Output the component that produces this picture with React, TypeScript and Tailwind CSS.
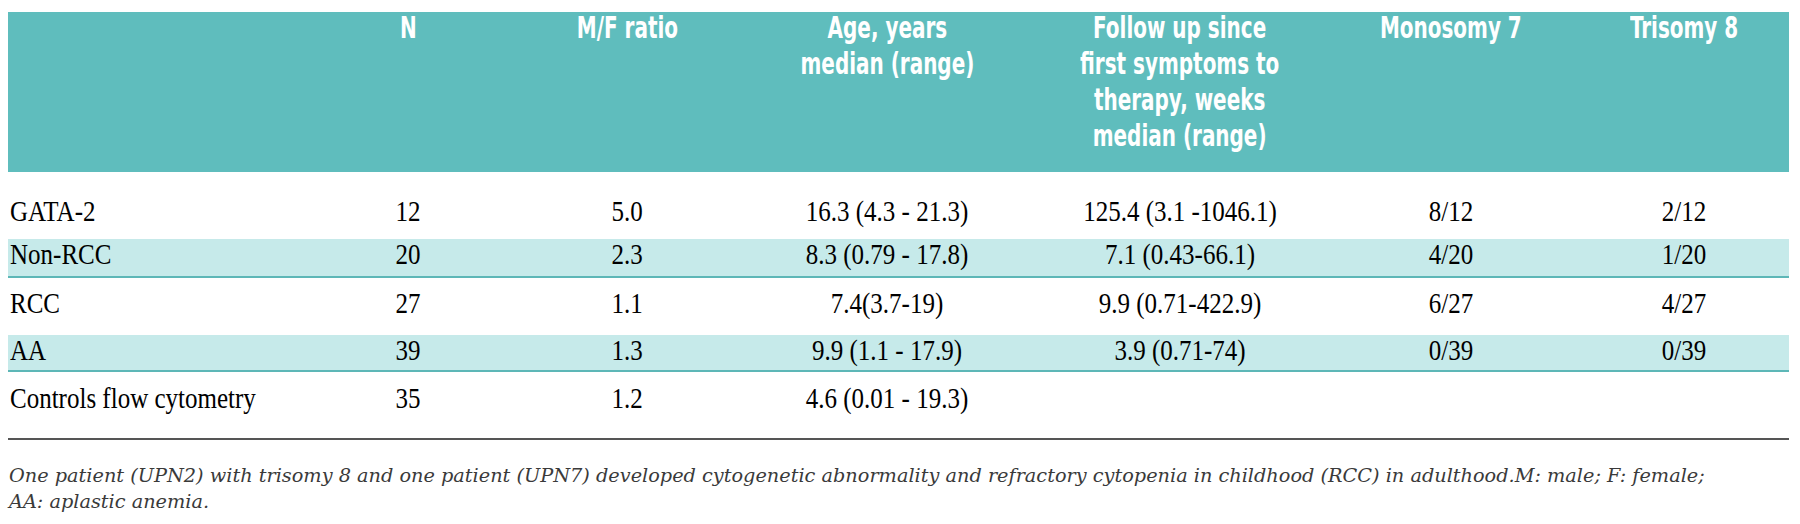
import React from "react";

const COLS = "grid grid-cols-[291px_218px_220px_300px_286px_256px_210px]";

type Row = { label: string; cells: string[] };

const rows: Row[] = [
  { label: "GATA-2", cells: ["12", "5.0", "16.3 (4.3 - 21.3)", "125.4 (3.1 -1046.1)", "8/12", "2/12"] },
  { label: "Non-RCC", cells: ["20", "2.3", "8.3 (0.79 - 17.8)", "7.1 (0.43-66.1)", "4/20", "1/20"] },
  { label: "RCC", cells: ["27", "1.1", "7.4(3.7-19)", "9.9 (0.71-422.9)", "6/27", "4/27"] },
  { label: "AA", cells: ["39", "1.3", "9.9 (1.1 - 17.9)", "3.9 (0.71-74)", "0/39", "0/39"] },
  { label: "Controls flow cytometry", cells: ["35", "1.2", "4.6 (0.01 - 19.3)", "", "", ""] },
];

function Cells({ row }: { row: Row }) {
  return (
    <>
      <div className="pl-[2px] whitespace-nowrap">
        <span className="inline-block origin-left scale-y-[1.2]">{row.label}</span>
      </div>
      {row.cells.map((c, i) => (
        <div key={i} className="text-center whitespace-nowrap">
          <span className="inline-block origin-center scale-y-[1.2]">{c}</span>
        </div>
      ))}
    </>
  );
}

function H({ children }: { children: React.ReactNode }) {
  return (
    <div className="flex justify-center -mt-[2px]">
      <div className="text-center whitespace-nowrap scale-x-[0.74] origin-center">{children}</div>
    </div>
  );
}

export default function App() {
  return (
    <div className="w-[1800px] h-[524px] bg-white overflow-hidden pt-[12px] pl-[8px] pr-[11px]">
      {/* Header */}
      <div
        className={`${COLS} h-[160px] bg-[#5fbdbd] text-white font-bold text-[30px] leading-[36px] font-['Liberation_Sans_Narrow','DejaVu_Sans_Condensed',sans-serif]`}
      >
        <div />
        <H>N</H>
        <H>M/F ratio</H>
        <H>
          Age, years
          <br />
          median (range)
        </H>
        <H>
          Follow up since
          <br />
          first symptoms to
          <br />
          therapy, weeks
          <br />
          median (range)
        </H>
        <H>Monosomy 7</H>
        <H>Trisomy 8</H>
      </div>

      {/* Body */}
      <div className="font-['Liberation_Serif',serif] text-[25px] leading-[30px] text-black">
        <div className={`${COLS} pt-[24px] pb-[13px]`}>
          <Cells row={rows[0]} />
        </div>
        <div className={`${COLS} h-[39px] bg-[#c6eaea] border-b-2 border-[#5db7b7]`}>
          <Cells row={rows[1]} />
        </div>
        <div className={`${COLS} pt-[10px] pb-[17px]`}>
          <Cells row={rows[2]} />
        </div>
        <div className={`${COLS} h-[37px] bg-[#c6eaea] border-b-2 border-[#5db7b7]`}>
          <Cells row={rows[3]} />
        </div>
        <div className={`${COLS} pt-[11px] pb-[25px]`}>
          <Cells row={rows[4]} />
        </div>
      </div>

      <div className="h-[2px] bg-[#555555]" />

      <div className="mt-[23px] font-['DejaVu_Serif',serif] italic text-[19.3px] leading-[26px] text-[#3a3a3a] pl-[1px]">
        <p className="whitespace-nowrap">
          One patient (UPN2) with trisomy 8 and one patient (UPN7) developed cytogenetic abnormality and refractory
          cytopenia in childhood (RCC) in adulthood.M: male; F: female;
        </p>
        <p>AA: aplastic anemia.</p>
      </div>
    </div>
  );
}
